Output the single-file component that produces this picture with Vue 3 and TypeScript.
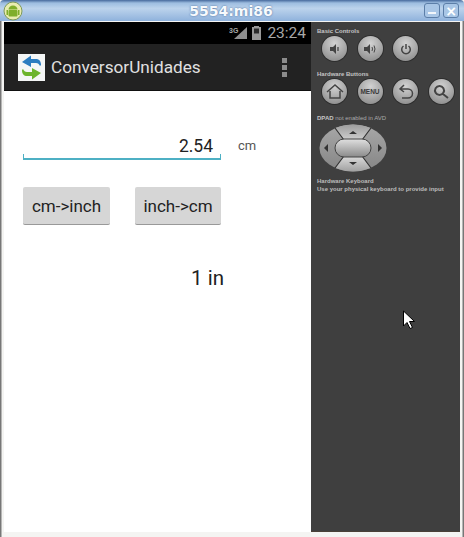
<script setup lang="ts">
const basicControls = ["volDown", "volUp", "power"];
const hardwareButtons = ["home", "menu", "back", "search"];
</script>

<template>
  <div class="window">
    <header class="titlebar">
      <svg class="android" width="20" height="20" viewBox="0 0 20 20">
        <circle cx="10" cy="10" r="9" fill="#e9ecb0" stroke="#7f9a58" />
        <path d="M5.500 8.500a4.500 4 0 0 1 9 0z" fill="#7fae2a" />
        <rect x="5.500" y="9" width="9" height="6.500" rx="1" fill="#7fae2a" />
        <rect x="3.500" y="9" width="1.500" height="5" fill="#7fae2a" />
        <rect x="15" y="9" width="1.500" height="5" fill="#7fae2a" />
      </svg>
      <span class="title">5554:mi86</span>
      <div class="win-buttons">
        <span class="win-btn"><i class="minimize"></i></span>
        <span class="win-btn close">×</span>
      </div>
    </header>

    <div class="frame">
      <section class="screen">
        <div class="statusbar">
          <svg width="19" height="16" viewBox="0 0 19 16">
            <path d="M5 14L18 2v12z" fill="#8f8f8f" />
            <text x="0" y="8" class="net">3G</text>
          </svg>
          <svg width="11" height="16" viewBox="0 0 11 16">
            <path d="M3 1h5v1h2v13H1V2h2z" fill="#999" />
            <path d="M3 3.500h5v5H3z" fill="#2c2c2c" />
          </svg>
          <span class="clock">23:24</span>
        </div>
        <div class="actionbar">
          <svg class="app-icon" width="27" height="27" viewBox="0 0 27 27">
            <rect width="27" height="27" fill="#f4f6f6" />
            <path d="M4 8l9-6.500v3.500h5c3 0 5 2 5 6l-1 1c-1-2-2-3-4-3h-5v4z" fill="#2b7cc0" />
            <path d="M23 19l-9 6.500V22H9c-3 0-5-2-5-6l1-1c1 2 2 3 4 3h5v-4z" fill="#6cb42c" />
          </svg>
          <span class="app-name">ConversorUnidades</span>
          <div class="overflow"><i></i><i></i><i></i></div>
        </div>
        <main class="content">
          <div class="input-row">
            <div class="field">2.54</div>
            <span class="unit">cm</span>
          </div>
          <div class="button-row">
            <button class="btn">cm-&gt;inch</button>
            <button class="btn">inch-&gt;cm</button>
          </div>
          <div class="result">1 in</div>
        </main>
      </section>

      <aside class="panel">
        <h4>Basic Controls</h4>
        <div class="round-row">
          <span v-for="b in basicControls" :key="b" class="round">
            <svg width="14" height="14" viewBox="0 0 14 14">
              <template v-if="b === 'volDown'">
                <path d="M2 5h3l3-3v10l-3-3H2z" fill="#444" />
                <path d="M10 5v4" stroke="#444" stroke-width="1.3" />
              </template>
              <template v-else-if="b === 'volUp'">
                <path d="M1 5h3l3-3v10l-3-3H1z" fill="#444" />
                <path d="M9 5q1 2 0 4M11 3.500q2 3.500 0 7" stroke="#444" fill="none" />
              </template>
              <template v-else>
                <path d="M4.500 4a4.300 4.300 0 1 0 5 0" stroke="#444" stroke-width="1.500" fill="none" />
                <path d="M7 2v5" stroke="#444" stroke-width="1.500" />
              </template>
            </svg>
          </span>
        </div>
        <h4>Hardware Buttons</h4>
        <div class="round-row">
          <span v-for="b in hardwareButtons" :key="b" class="round">
            <span v-if="b === 'menu'" class="menu-label">MENU</span>
            <svg v-else width="18" height="18" viewBox="0 0 18 18">
              <path v-if="b === 'home'" d="M1 9l8-7 8 7M4 8v7h10V8" stroke="#444" stroke-width="1.500" fill="none" />
              <path v-else-if="b === 'back'" d="M7 2L3 6l4 3M3 6h8a4 4 0 0 1 0 9H5" stroke="#444" stroke-width="1.500" fill="none" />
              <path v-else d="M7.500 3a4.500 4.500 0 1 0 .01 0M11 11l5 4" stroke="#444" stroke-width="2" fill="none" />
            </svg>
          </span>
        </div>
        <h4 class="dpad-title">DPAD <em>not enabled in AVD</em></h4>
        <svg class="dpad" width="68" height="48" viewBox="0 0 68 48">
          <defs>
            <linearGradient id="pad" x1="0" y1="0" x2="0" y2="1">
              <stop offset="0" stop-color="#a8a8a8" />
              <stop offset="1" stop-color="#858585" />
            </linearGradient>
            <linearGradient id="padTop" x1="0" y1="0" x2="0" y2="1">
              <stop offset="0" stop-color="#9c9c9c" />
              <stop offset="1" stop-color="#cfcfcf" />
            </linearGradient>
            <linearGradient id="padBottom" x1="0" y1="0" x2="0" y2="1">
              <stop offset="0" stop-color="#dcdcdc" />
              <stop offset="1" stop-color="#a0a0a0" />
            </linearGradient>
            <linearGradient id="center" x1="0" y1="0" x2="0" y2="1">
              <stop offset="0" stop-color="#e0e0e0" />
              <stop offset="1" stop-color="#8a8a8a" />
            </linearGradient>
          </defs>
          <ellipse cx="34" cy="24" rx="33.500" ry="23.500" fill="url(#pad)" />
          <path d="M16 4Q34-3 52 4L43 16H25z" fill="url(#padTop)" />
          <path d="M16 44Q34 51 52 44L43 32H25z" fill="url(#padBottom)" />
          <path d="M16 4l9 12M52 4l-9 12M16 44l9-12M52 44l-9-12" stroke="#333" stroke-width="1.200" />
          <rect x="16" y="15" width="36" height="18" rx="9" fill="url(#center)" stroke="#444" />
          <path d="M34 7l-4 3h8zM34 41l-4-3h8zM5 24l4-4v8zM63 24l-4-4v8z" fill="#333" />
        </svg>
        <p class="kbd-note">Hardware Keyboard<br />Use your physical keyboard to provide input</p>
      </aside>
    </div>

    <svg class="cursor" width="14" height="20" viewBox="0 0 14 20">
      <path d="M1.500 1v15l3.500-3.500 3 6 2.500-1-3-6h5z" fill="#fff" stroke="#000" />
    </svg>
  </div>
</template>

<style scoped>
.window {
  position: relative;
  width: 464px;
  height: 537px;
  display: flex;
  flex-direction: column;
  background: #f6f6f4;
  font-family: "Roboto", "Liberation Sans", sans-serif;
  overflow: hidden;
}

.titlebar {
  height: 21px;
  flex-shrink: 0;
  display: flex;
  align-items: center;
  justify-content: space-between;
  padding: 0 5px 0 3px;
  background: linear-gradient(#46699c 0, #9dbde0 3px, #bcd3ec 40%, #8fb2dc 100%);
  border-radius: 4px 4px 0 0;
}

.android {
  flex-shrink: 0;
}

.title {
  font: bold 14px "DejaVu Sans", sans-serif;
  color: #f7fafd;
  text-shadow: 0 0 2px #3f6596;
  margin-left: 15px;
}

.win-buttons {
  display: flex;
  gap: 3px;
}

.win-btn {
  width: 16px;
  height: 15px;
  border: 1px solid #5c7ea8;
  border-radius: 3px;
  background: #a9c6e6;
  color: #fff;
  box-sizing: border-box;
  display: flex;
  align-items: center;
  justify-content: center;
  font: bold 14px/1 "DejaVu Sans", sans-serif;
}

.minimize {
  width: 8px;
  height: 2px;
  margin-top: 5px;
  background: #f2f6fb;
}

.frame {
  flex: 1;
  min-height: 0;
  display: flex;
  padding: 1px 4px 5px;
  background: linear-gradient(90deg, #777 0, #777 1px, #f4f4f2 2px, #f4f4f2 462px, #777 463px);
}

.screen {
  width: 307px;
  flex-shrink: 0;
  display: flex;
  flex-direction: column;
  background: #fff;
}

.statusbar {
  height: 22px;
  flex-shrink: 0;
  background: #000;
  display: flex;
  align-items: center;
  justify-content: flex-end;
  gap: 3px;
  padding-right: 5px;
}

.net {
  font: bold 7px "Liberation Sans", sans-serif;
  fill: #a8a8a8;
}

.clock {
  color: #a8a8a8;
  font-size: 15.500px;
  margin-left: 2px;
}

.actionbar {
  height: 47px;
  flex-shrink: 0;
  box-sizing: border-box;
  background: #222;
  border-bottom: 1px solid #111;
  display: flex;
  align-items: center;
  padding: 0 24px 0 14px;
}

.app-name {
  color: #e0e0e0;
  font-size: 17.200px;
  margin-left: 6px;
  flex: 1;
}

.overflow {
  display: flex;
  flex-direction: column;
  gap: 2px;
}

.overflow i {
  width: 5px;
  height: 5px;
  background: #8c8c8c;
}

.content {
  flex: 1;
  display: flex;
  flex-direction: column;
  padding: 0 0 0 19px;
}

.input-row {
  margin-top: 42px;
  display: flex;
  align-items: flex-start;
}

.field {
  position: relative;
  width: 198px;
  height: 27px;
  box-sizing: border-box;
  padding-right: 8px;
  text-align: right;
  color: #222;
  font-size: 17.500px;
  line-height: 27px;
  border-bottom: 2px solid #4db0c4;
}

.field::before,
.field::after {
  content: "";
  position: absolute;
  bottom: 0;
  width: 1px;
  height: 4px;
  background: #4db0c4;
}

.field::before {
  left: 0;
}

.field::after {
  right: 0;
}

.unit {
  color: #555;
  font-size: 13px;
  margin: 5px 0 0 17px;
}

.button-row {
  margin-top: 27px;
  display: flex;
  gap: 25px;
}

.btn {
  width: 87px;
  height: 38px;
  padding: 0;
  border: 0;
  border-bottom: 1px solid #999;
  border-radius: 2px;
  background: #d6d6d6;
  color: #222;
  font-family: inherit;
  font-size: 17px;
}

.btn + .btn {
  width: 86px;
}

.result {
  width: 201px;
  margin-top: 41px;
  text-align: right;
  color: #222;
  font-size: 20.500px;
}

.panel {
  flex: 1;
  background: #3f3f3f;
  display: flex;
  flex-direction: column;
  padding: 5px 0 0 6px;
  border-bottom: 1px solid #4a4038;
}

h4 {
  margin: 0;
  font: bold 6px/8px "Liberation Sans", sans-serif;
  color: #c4c4c4;
}

h4 em {
  font-style: normal;
  font-weight: normal;
  color: #aaa;
}

.round-row {
  display: flex;
  gap: 10.500px;
  margin: 1px 0 8px 5px;
  height: 26px;
}

.round {
  width: 25px;
  height: 25px;
  border-radius: 50%;
  background: radial-gradient(circle at 50% 30%, #d2d2d2, #8e8e8e 85%);
  box-shadow: 0 0 0 1px #2e2e2e;
  display: flex;
  align-items: center;
  justify-content: center;
}

.menu-label {
  font: bold 6.500px "Liberation Sans", sans-serif;
  color: #3a3a3a;
}

.dpad-title {
  margin-top: 1px;
}

.dpad {
  margin: 2px 0 0 2px;
}

.kbd-note {
  margin: 5px 0 0;
  font: bold 6px/8px "Liberation Sans", sans-serif;
  color: #bcbcbc;
}

/* mouse pointer sits over the emulator skin */
.cursor {
  position: absolute;
  left: 402px;
  top: 310px;
}
</style>

<style>
html,
body {
  margin: 0;
  background: #f6f6f4;
}
</style>
